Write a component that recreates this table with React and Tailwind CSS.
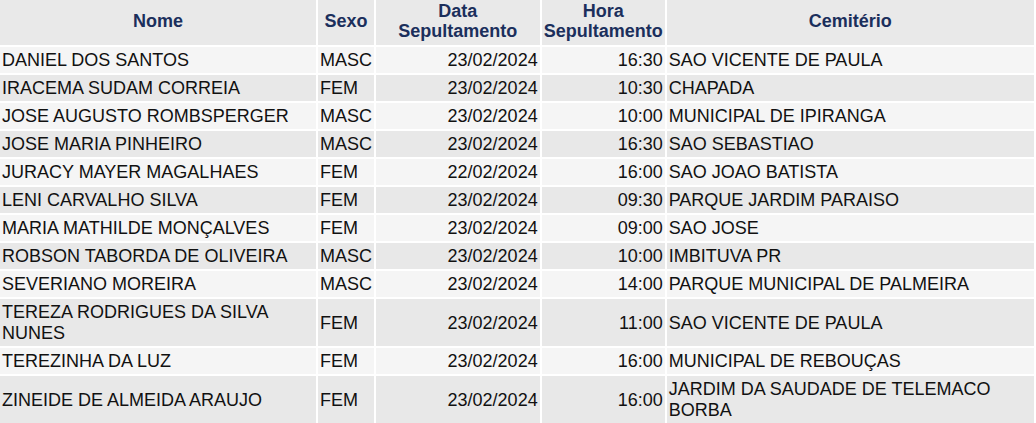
const rows = [
  ["DANIEL DOS SANTOS", "MASC", "23/02/2024", "16:30", "SAO VICENTE DE PAULA"],
  ["IRACEMA SUDAM CORREIA", "FEM", "23/02/2024", "10:30", "CHAPADA"],
  ["JOSE AUGUSTO ROMBSPERGER", "MASC", "23/02/2024", "10:00", "MUNICIPAL DE IPIRANGA"],
  ["JOSE MARIA PINHEIRO", "MASC", "23/02/2024", "16:30", "SAO SEBASTIAO"],
  ["JURACY MAYER MAGALHAES", "FEM", "22/02/2024", "16:00", "SAO JOAO BATISTA"],
  ["LENI CARVALHO SILVA", "FEM", "23/02/2024", "09:30", "PARQUE JARDIM PARAISO"],
  ["MARIA MATHILDE MONÇALVES", "FEM", "23/02/2024", "09:00", "SAO JOSE"],
  ["ROBSON TABORDA DE OLIVEIRA", "MASC", "23/02/2024", "10:00", "IMBITUVA PR"],
  ["SEVERIANO MOREIRA", "MASC", "23/02/2024", "14:00", "PARQUE MUNICIPAL DE PALMEIRA"],
  ["TEREZA RODRIGUES DA SILVA NUNES", "FEM", "23/02/2024", "11:00", "SAO VICENTE DE PAULA"],
  ["TEREZINHA DA LUZ", "FEM", "23/02/2024", "16:00", "MUNICIPAL DE REBOUÇAS"],
  ["ZINEIDE DE ALMEIDA ARAUJO", "FEM", "23/02/2024", "16:00", "JARDIM DA SAUDADE DE TELEMACO BORBA"],
];

export default function App() {
  return (
    <div className="bg-white min-h-screen overflow-hidden" style={{ fontFamily: '"Liberation Sans", Arial, sans-serif' }}>
      <table className="table-fixed border-separate border-spacing-[2px] -mt-[2px] -ml-[2px] text-[18px] leading-[21px] text-[#111]">
        <colgroup>
          <col className="w-[317px]" />
          <col className="w-[55px]" />
          <col className="w-[164px]" />
          <col className="w-[121px]" />
          <col className="w-[369px]" />
        </colgroup>
        <thead>
          <tr className="bg-[#e9e9e9] text-[#1b2f5c] font-bold leading-[20px]">
            <th className="px-[2px] pt-[1px] pb-[4px] text-center">Nome</th>
            <th className="px-[2px] pt-[1px] pb-[4px] text-center">Sexo</th>
            <th className="px-[2px] pt-[1px] pb-[4px] text-center">Data<br />Sepultamento</th>
            <th className="px-[2px] pt-[1px] pb-[4px] text-center">Hora<br />Sepultamento</th>
            <th className="px-[2px] pt-[1px] pb-[4px] text-center">Cemitério</th>
          </tr>
        </thead>
        <tbody>
          {rows.map((r, i) => (
            <tr key={i} className={i % 2 === 0 ? "bg-[#f5f5f5]" : "bg-[#e8e8e8]"}>
              <td className="px-[2px] pt-[3px] pb-[2px] text-left">{r[0]}</td>
              <td className="px-[2px] pt-[3px] pb-[2px] text-left">{r[1]}</td>
              <td className="px-[2px] pt-[3px] pb-[2px] text-right">{r[2]}</td>
              <td className="px-[2px] pt-[3px] pb-[2px] text-right">{r[3]}</td>
              <td className="px-[2px] pt-[3px] pb-[2px] text-left">{r[4]}</td>
            </tr>
          ))}
        </tbody>
      </table>
    </div>
  );
}
